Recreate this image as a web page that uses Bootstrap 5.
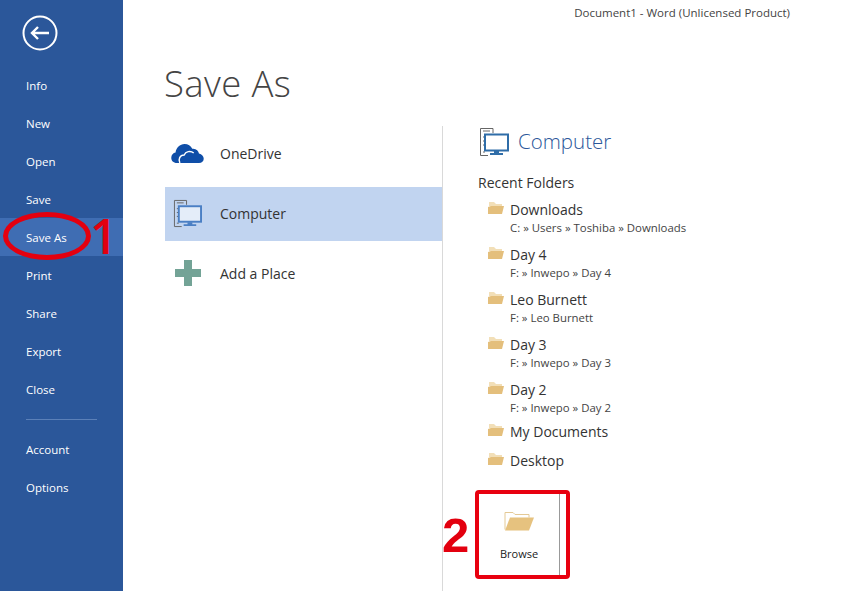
<!DOCTYPE html>
<html lang="en">
<head>
    <meta charset="UTF-8">
    <meta name="viewport" content="width=device-width, initial-scale=1.0">
    <title>Save As</title>
    <link href="https://cdn.jsdelivr.net/npm/bootstrap@5.3.2/dist/css/bootstrap.min.css" rel="stylesheet">
    <style>
        html, body { height: 100%; }
        body { font-family: "Open Sans", "Liberation Sans", sans-serif; background: #fff; color: #444; overflow: hidden; }
        .app-shell { height: 591px; width: 858px; position: relative; }
        .side-menu { width: 123px; background: #2b579a; flex: none; }
        .back-wrap { height: 66px; padding: 15px 0 0 22px; }
        .menu-item { height: 38px; line-height: 39px; padding-left: 26px; color: #fff; font-size: 11.5px; }
        .menu-item.active-item { background: #3f6db3; }
        .menu-rule { height: 1px; background: #5b80b8; width: 71px; margin-left: 26px; }
        .rule-gap { height: 22px; display: flex; align-items: center; }
        .main-area { flex: 1; min-width: 0; }
        .title-bar { height: 26px; font-size: 11.5px; color: #444; text-align: right; padding-right: 68px; line-height: 26px; }
        .page-title { font-size: 36.5px; font-weight: 300; color: #444; margin: 0; padding: 32px 0 0 41px; height: 100px; line-height: 50px; letter-spacing: .4px; }
        .places { width: 320px; padding: 1px 0 0 42px; border-right: 1px solid #d9d9d9; height: 465px; flex: none; }
        .place-row { height: 54px; margin-bottom: 6px; width: 277px; display: flex; align-items: center; font-size: 14px; color: #333; }
        .place-row span { margin-top: -2px; }
        .place-row.sel { background: #c1d4f0; }
        .place-icon { width: 55px; padding-right: 10px; margin-top: -2px; display: flex; justify-content: center; flex: none; }
        .detail { padding-left: 35px; }
        .detail-head { height: 31px; display: flex; align-items: center; gap: 9px; padding-left: 1px; font-size: 20.5px; color: #2b579a; font-weight: 300; }
        .recent-label { font-size: 14px; color: #333; margin-top: 16px; height: 25px; line-height: 20px; }
        .folder-row { display: flex; padding-left: 10px; gap: 6px; height: 45px; padding-top: 2px; }
        .folder-row.short-row { height: 29px; }
        .folder-row.last-path { height: 42px; }
        .folder-name { font-size: 14px; color: #333; line-height: 20px; }
        .folder-path { font-size: 11.4px; color: #444; line-height: 15px; }
        .folder-row svg { margin-top: 1px; flex: none; }
        .browse-box { width: 95px; height: 89px; border: 4px solid #e8000f; border-radius: 4px; margin: 12px 0 0 -3px; position: relative; text-align: center; font-size: 11px; color: #222; padding-top: 15px; }
        .browse-box::after { content: ""; position: absolute; right: 6px; top: 0; bottom: 0; width: 1px; background: #999; }
        .browse-inner { width: 80px; }
        .browse-inner svg { display: block; margin: 0 auto 14px; }
        .mark-num { position: absolute; color: #e3000f; font-family: "Liberation Sans", sans-serif; font-weight: 700; font-size: 49px; line-height: 49px; }
        .mark-one { font-family: "Open Sans", sans-serif; font-weight: 600; font-size: 48px; left: 90px; top: 211px; }
        .mark-two { left: 442px; top: 511px; }
        .ring { position: absolute; left: 3px; top: 212px; width: 88px; height: 48px; border: 5px solid #e3000f; border-radius: 50%; }
    </style>
</head>
<body>
<div class="app-shell d-flex">
    <div class="side-menu">
        <div class="back-wrap">
            <svg width="36" height="36" viewBox="0 0 36 36" fill="none" stroke="#fff">
                <circle cx="18" cy="18" r="16.5" stroke-width="2"/>
                <path d="M10 18H27M16 12L10 18L16 24" stroke-width="2.4"/>
            </svg>
        </div>
        <div class="menu-item">Info</div>
        <div class="menu-item">New</div>
        <div class="menu-item">Open</div>
        <div class="menu-item">Save</div>
        <div class="menu-item active-item">Save As</div>
        <div class="menu-item">Print</div>
        <div class="menu-item">Share</div>
        <div class="menu-item">Export</div>
        <div class="menu-item">Close</div>
        <div class="rule-gap"><div class="menu-rule"></div></div>
        <div class="menu-item">Account</div>
        <div class="menu-item">Options</div>
    </div>
    <div class="main-area">
        <div class="title-bar">Document1 - Word (Unlicensed Product)</div>
        <h1 class="page-title">Save As</h1>
        <div class="d-flex">
            <div class="places">
                <div class="place-row">
                    <div class="place-icon">
                        <svg width="33" height="21" viewBox="0 0 34 22"><path fill="#0f4ea8" d="M6 21C2 21 0 18.500 0 15.500C0 12.500 2 10.500 4.500 10C5 5 9 1 14 1C17.500 1 20.500 3 22 6C26 5.500 28.500 8 29 11C32 11.500 34 14 34 16.500C34 19 32 21 29 21Z"/><path fill="none" stroke="#fff" stroke-width="1.500" d="M9 21C7 17 9 12.500 13.500 12.500C15 9 20 7.500 23.500 10.500"/></svg>
                    </div>
                    <span>OneDrive</span>
                </div>
                <div class="place-row sel">
                    <div class="place-icon">
                        <svg width="29" height="29" viewBox="0 0 30 30" fill="none"><path stroke="#666" d="M1.500 1.500H14V6M1.500 1.500V28.500H9M4 4H11M4 10H6M4 14H6M4 18H6M4 25H6"/><rect x="6" y="7.500" width="23" height="16" fill="#e4edf9" stroke="#4a7fc4" stroke-width="2"/><path fill="#4a7fc4" d="M15 24H20V26H24V28H11V26H15Z"/></svg>
                    </div>
                    <span>Computer</span>
                </div>
                <div class="place-row">
                    <div class="place-icon">
                        <svg width="26" height="26" viewBox="0 0 26 26"><path fill="#73a396" d="M9 0H17V9H26V17H17V26H9V17H0V9H9Z"/></svg>
                    </div>
                    <span>Add a Place</span>
                </div>
            </div>
            <div class="detail">
                <div class="detail-head">
                    <svg width="30" height="30" viewBox="0 0 30 30" fill="none"><path stroke="#666" d="M1.500 1.500H14V6M1.500 1.500V28.500H9M4 4H11M4 10H6M4 14H6M4 18H6M4 25H6"/><rect x="6" y="7.500" width="23" height="16" fill="#fff" stroke="#2f6da8" stroke-width="2"/><path fill="#2f6da8" d="M15 24H20V26H24V28H11V26H15Z"/></svg>
                    <span>Computer</span>
                </div>
                <div class="recent-label">Recent Folders</div>
                <div class="folder-row">
                    <svg width="16" height="13" viewBox="0 0 16 13"><path fill="#f2dfb8" d="M1 1H6L8 3H14V5H1Z"/><path fill="#e4bf7c" d="M3 5H16L14 13H0V6Z"/></svg>
                    <div><div class="folder-name">Downloads</div><div class="folder-path">C: » Users » Toshiba » Downloads</div></div>
                </div>
                <div class="folder-row">
                    <svg width="16" height="13" viewBox="0 0 16 13"><path fill="#f2dfb8" d="M1 1H6L8 3H14V5H1Z"/><path fill="#e4bf7c" d="M3 5H16L14 13H0V6Z"/></svg>
                    <div><div class="folder-name">Day 4</div><div class="folder-path">F: » Inwepo » Day 4</div></div>
                </div>
                <div class="folder-row">
                    <svg width="16" height="13" viewBox="0 0 16 13"><path fill="#f2dfb8" d="M1 1H6L8 3H14V5H1Z"/><path fill="#e4bf7c" d="M3 5H16L14 13H0V6Z"/></svg>
                    <div><div class="folder-name">Leo Burnett</div><div class="folder-path">F: » Leo Burnett</div></div>
                </div>
                <div class="folder-row">
                    <svg width="16" height="13" viewBox="0 0 16 13"><path fill="#f2dfb8" d="M1 1H6L8 3H14V5H1Z"/><path fill="#e4bf7c" d="M3 5H16L14 13H0V6Z"/></svg>
                    <div><div class="folder-name">Day 3</div><div class="folder-path">F: » Inwepo » Day 3</div></div>
                </div>
                <div class="folder-row last-path">
                    <svg width="16" height="13" viewBox="0 0 16 13"><path fill="#f2dfb8" d="M1 1H6L8 3H14V5H1Z"/><path fill="#e4bf7c" d="M3 5H16L14 13H0V6Z"/></svg>
                    <div><div class="folder-name">Day 2</div><div class="folder-path">F: » Inwepo » Day 2</div></div>
                </div>
                <div class="folder-row short-row">
                    <svg width="16" height="13" viewBox="0 0 16 13"><path fill="#f2dfb8" d="M1 1H6L8 3H14V5H1Z"/><path fill="#e4bf7c" d="M3 5H16L14 13H0V6Z"/></svg>
                    <div class="folder-name">My Documents</div>
                </div>
                <div class="folder-row short-row">
                    <svg width="16" height="13" viewBox="0 0 16 13"><path fill="#f2dfb8" d="M1 1H6L8 3H14V5H1Z"/><path fill="#e4bf7c" d="M3 5H16L14 13H0V6Z"/></svg>
                    <div class="folder-name">Desktop</div>
                </div>
                <div class="browse-box">
                    <div class="browse-inner">
                        <svg width="30" height="23" viewBox="0 0 30 22"><path fill="none" stroke="#e4c995" d="M1 20V3H9L11 5H25V8"/><path fill="#e6c27f" d="M6 8H30L25 21H1Z"/></svg>
                        Browse
                    </div>
                </div>
            </div>
        </div>
    </div>
    <div class="ring"></div>
    <div class="mark-num mark-one">1</div>
    <div class="mark-num mark-two">2</div>
</div>
<script src="https://cdn.jsdelivr.net/npm/bootstrap@5.3.2/dist/js/bootstrap.bundle.min.js"></script>
</body>
</html>
